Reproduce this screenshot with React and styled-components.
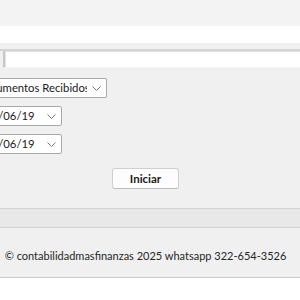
import React from "react";
import styled, { createGlobalStyle } from "styled-components";

const Global = createGlobalStyle`
  html, body { margin: 0; padding: 0; background: #ffffff; }
  body { font-family: Lato, "Open Sans", "Liberation Sans", sans-serif; }
`;

const Page = styled.div`
  width: 300px;
  height: 300px;
  overflow: hidden;
  display: flex;
  flex-direction: column;
  background: #ffffff;
  font-size: 11px;
  color: #1a1a1a;
`;

const TopStrip = styled.div`
  height: 26px;
  background: #f3f3f3;
`;

const WhiteBand = styled.div`
  height: 17px;
  background: #ffffff;
`;

const Spacer = styled.div`
  height: 6px;
  background: #f0f0f0;
`;

const InputRow = styled.div`
  display: flex;
  background: #f0f0f0;
  padding-left: 3px;
  border-top: 2px solid #d3d3d3;
`;

const TextInput = styled.div`
  flex: 1;
  height: 14px;
  background: #ffffff;
  border-left: 2px solid #c8c8c8;
  border-bottom: 1px solid #f4f4f4;
  box-shadow: inset 1px 1px 0 #e2e2e2;
  margin-right: -4px;
  padding: 1px 0;
`;

const FormArea = styled.div`
  flex: 1;
  background: #f0f0f0;
  display: flex;
  flex-direction: column;
  align-items: flex-start;
  padding-top: 10px;
`;

const Dropdown = styled.div`
  display: flex;
  align-items: center;
  width: ${(p) => p.$width}px;
  height: 18px;
  margin-left: ${(p) => p.$offset}px;
  margin-bottom: ${(p) => p.$gap}px;
  background: #ffffff;
  border: 1px solid #a9a9a9;
  border-radius: 2px;
  box-sizing: content-box;
`;

const DropText = styled.span`
  flex: 1;
  overflow: hidden;
  white-space: nowrap;
  padding-left: 4px;
  line-height: 18px;
  font-size: 11.3px;
  color: #1a1a1a;
`;

const Chevron = styled.span`
  width: 19px;
  display: flex;
  align-items: center;
  justify-content: center;
  flex-shrink: 0;
`;

const ButtonRow = styled.div`
  align-self: stretch;
  display: flex;
  justify-content: center;
  padding-right: 9px;
  margin-top: 4px;
`;

const Button = styled.div`
  width: 65px;
  height: 19px;
  background: #fdfdfd;
  border: 1px solid #d0d0d0;
  border-bottom-color: #bcbcbc;
  border-radius: 3px;
  display: flex;
  align-items: center;
  justify-content: center;
  font-weight: 700;
  font-size: 11.5px;
  color: #1b1b1b;
`;

const StatusBar = styled.div`
  align-self: stretch;
  height: 18px;
  background: #e8e8e8;
  border-top: 1px solid #d2d2d2;
  border-bottom: 1px solid #d2d2d2;
  margin-top: 19px;
`;

const Footer = styled.div`
  height: 50px;
  box-sizing: border-box;
  background: #f0f0f0;
  border-bottom: 1px solid #c9c9c9;
  display: flex;
  align-items: center;
  justify-content: center;
  padding: 5px 9px 0 0;
  font-size: 11px;
  color: #262626;
  white-space: nowrap;
`;

const Bottom = styled.div`
  flex: 1;
  background: #ffffff;
`;

function ChevronIcon() {
  return (
    <svg width="9" height="5" viewBox="0 0 9 5">
      <path d="M0.5 0.5 L4.5 4.5 L8.5 0.5" fill="none" stroke="#7a7a7a" strokeWidth="1" />
    </svg>
  );
}

function Select({ text, width, offset, gap }) {
  return (
    <Dropdown $width={width} $offset={offset} $gap={gap}>
      <DropText>{text}</DropText>
      <Chevron>
        <ChevronIcon />
      </Chevron>
    </Dropdown>
  );
}

export default function App() {
  return (
    <>
      <Global />
      <Page>
        <TopStrip />
        <WhiteBand />
        <Spacer />
        <InputRow>
          <TextInput />
        </InputRow>
        <FormArea>
          <Select text="Documentos Recibidos" width={134} offset={-29} gap={8} />
          <Select text="2025/06/19" width={93} offset={-33} gap={8} />
          <Select text="2025/06/19" width={93} offset={-33} gap={10} />
          <ButtonRow>
            <Button>Iniciar</Button>
          </ButtonRow>
          <StatusBar />
        </FormArea>
        <Footer>© contabilidadmasfinanzas 2025 whatsapp 322-654-3526</Footer>
        <Bottom />
      </Page>
    </>
  );
}
